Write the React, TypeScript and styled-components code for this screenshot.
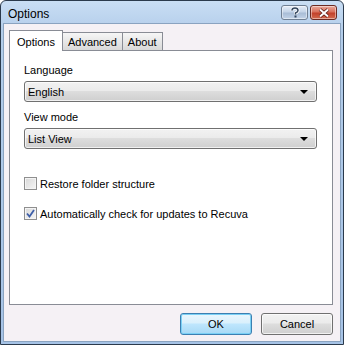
import styled, { createGlobalStyle } from 'styled-components';

const Global = createGlobalStyle`
    html, body { margin: 0; padding: 0; background: #fff; }
    body { font-family: 'Liberation Sans', Arial, sans-serif; }
`;

const Win = styled.div`
    width: 344px;
    height: 345px;
    box-sizing: border-box;
    border: 1px solid #2b3a4c;
    border-radius: 6px 6px 0 0;
    background: linear-gradient(#c9def4, #b3cdea 30px, #a6c3e6);
    display: flex;
    flex-direction: column;
    padding: 0 2px 2px 2px;
`;

const TitleBar = styled.div`
    height: 22px;
    display: flex;
    align-items: flex-start;
    padding-left: 5px;
    padding-right: 4px;
`;

const Title = styled.div`
    font-size: 12px;
    color: #000;
    line-height: 16px;
    flex: 1;
    padding-top: 5px;
`;

const CapBtn = styled.div<{ $close?: boolean }>`
    width: 27px;
    height: 15px;
    margin-top: 4px;
    margin-left: ${(p) => (p.$close ? 2 : 0)}px;
    box-sizing: border-box;
    border: 1px solid ${(p) => (p.$close ? '#6b2a22' : '#6f7f93')};
    border-radius: 3px;
    background: ${(p) =>
        p.$close
            ? 'linear-gradient(#e9a99b 0%, #d8705c 45%, #c2412b 55%, #d26a4f 100%)'
            : 'linear-gradient(#e6eef8 0%, #c4d4e8 45%, #a9bdd6 55%, #c2d3e8 100%)'};
    display: flex;
    align-items: center;
    justify-content: center;
    box-shadow: inset 0 0 0 1px rgba(255, 255, 255, 0.45);
`;

const Body = styled.div`
    flex: 1;
    background: #f5f1f5;
    border: 1px solid #8aa3c0;
    display: flex;
    flex-direction: column;
    padding: 6px 7px 0 5px;
`;

const TabRow = styled.div`
    display: flex;
    align-items: flex-end;
    height: 20px;
    position: relative;
    z-index: 1;
`;

const Tab = styled.div<{ $active?: boolean; $pad: number }>`
    font-size: 11px;
    color: #000;
    box-sizing: border-box;
    height: ${(p) => (p.$active ? 21 : 18)}px;
    padding: ${(p) => (p.$active ? 4 : 2)}px ${(p) => p.$pad}px 0;
    line-height: 14px;
    border: 1px solid #898c95;
    border-bottom: none;
    margin-left: -1px;
    margin-bottom: ${(p) => (p.$active ? -1 : 0)}px;
    background: ${(p) => (p.$active ? '#fff' : 'linear-gradient(#f6f6f6, #e6e6e6 55%, #d9d9d9)')};
    &:first-child { margin-left: 0; }
`;

const Panel = styled.div`
    height: 255px;
    box-sizing: border-box;
    background: #fff;
    border: 1px solid #898c95;
    padding: 12px 15px 0 14px;
    display: flex;
    flex-direction: column;
`;

const Label = styled.div`
    font-size: 11px;
    color: #000;
    line-height: 15px;
    margin-bottom: 3px;
`;

const Select = styled.div`
    height: 21px;
    box-sizing: border-box;
    border: 1px solid #707070;
    border-radius: 3px;
    background: linear-gradient(#f2f2f2 0%, #ebebeb 45%, #dddddd 50%, #cfcfcf 100%);
    display: flex;
    align-items: center;
    padding: 0 8px 0 3px;
    font-size: 11px;
    color: #000;
    margin-bottom: 8px;
    box-shadow: inset 0 0 0 1px rgba(255, 255, 255, 0.7);
`;

const SelText = styled.div`
    flex: 1;
`;

const Arrow = styled.div`
    width: 0;
    height: 0;
    border-left: 4px solid transparent;
    border-right: 4px solid transparent;
    border-top: 4px solid #000;
`;

const CheckRow = styled.div<{ $top: number }>`
    display: flex;
    align-items: center;
    margin-top: ${(p) => p.$top}px;
    font-size: 11px;
    color: #000;
    gap: 3px;
    height: 15px;
`;

const Box = styled.div`
    width: 13px;
    height: 13px;
    box-sizing: border-box;
    border: 1px solid #8f8f8f;
    background: linear-gradient(135deg, #d8d8d8, #f6f6f6);
    box-shadow: inset 0 0 0 1px #f4f4f4;
    display: flex;
    align-items: center;
    justify-content: center;
`;

const Footer = styled.div`
    flex: 1;
    display: flex;
    justify-content: flex-end;
    align-items: flex-start;
    gap: 9px;
    padding-top: 8px;
`;

const Button = styled.div<{ $default?: boolean }>`
    width: 72px;
    height: 22px;
    box-sizing: border-box;
    border: 1px solid ${(p) => (p.$default ? '#3c7fb1' : '#707070')};
    border-radius: 3px;
    background: ${(p) =>
        p.$default
            ? 'linear-gradient(#eaf6fd 0%, #d9f0fc 45%, #bee6fd 50%, #a7d9f5 100%)'
            : 'linear-gradient(#f2f2f2 0%, #ebebeb 45%, #dddddd 50%, #cfcfcf 100%)'};
    box-shadow: inset 0 0 0 1px ${(p) => (p.$default ? '#7ad0f5' : 'rgba(255,255,255,0.7)')};
    font-size: 11px;
    color: #000;
    display: flex;
    align-items: center;
    justify-content: center;
`;

export default function App() {
    return (
        <>
            <Global />
            <Win>
                <TitleBar>
                    <Title>Options</Title>
                    <CapBtn>
                        <svg width="10" height="11" viewBox="0 0 10 11">
                            <path d="M2 3.5 Q2 1 5 1 Q8 1 8 3.5 Q8 5 5.5 6 L5.5 7.5" fill="none" stroke="#fff" strokeWidth="3" />
                            <path d="M2 3.5 Q2 1 5 1 Q8 1 8 3.5 Q8 5 5.5 6 L5.5 7.5" fill="none" stroke="#35475e" strokeWidth="1.5" />
                            <rect x="4.5" y="8.5" width="2" height="2" fill="#35475e" />
                        </svg>
                    </CapBtn>
                    <CapBtn $close>
                        <svg width="12" height="10" viewBox="0 0 12 10">
                            <path d="M2 1.5 L10 8.5 M10 1.5 L2 8.5" stroke="#5a1a12" strokeWidth="3.6" />
                            <path d="M2 1.5 L10 8.5 M10 1.5 L2 8.5" stroke="#fff" strokeWidth="2" />
                        </svg>
                    </CapBtn>
                </TitleBar>
                <Body>
                    <TabRow>
                        <Tab $active $pad={7}>Options</Tab>
                        <Tab $pad={5}>Advanced</Tab>
                        <Tab $pad={5}>About</Tab>
                    </TabRow>
                    <Panel>
                        <Label>Language</Label>
                        <Select>
                            <SelText>English</SelText>
                            <Arrow />
                        </Select>
                        <Label>View mode</Label>
                        <Select>
                            <SelText>List View</SelText>
                            <Arrow />
                        </Select>
                        <CheckRow $top={19}>
                            <Box />
                            Restore folder structure
                        </CheckRow>
                        <CheckRow $top={15}>
                            <Box>
                                <svg width="9" height="9" viewBox="0 0 9 9">
                                    <path d="M1 4.5 L3.5 7.5 L8 1" fill="none" stroke="#3d5ea8" strokeWidth="1.8" />
                                </svg>
                            </Box>
                            Automatically check for updates to Recuva
                        </CheckRow>
                    </Panel>
                    <Footer>
                        <Button $default>OK</Button>
                        <Button>Cancel</Button>
                    </Footer>
                </Body>
            </Win>
        </>
    );
}
